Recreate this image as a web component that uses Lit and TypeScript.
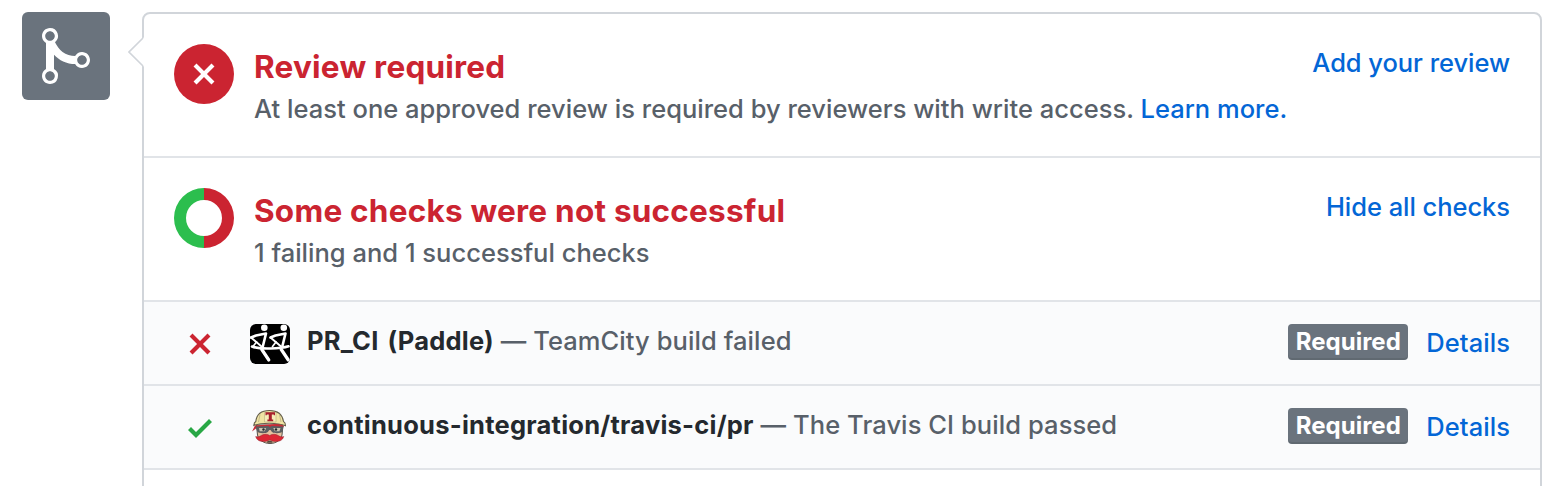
import { LitElement, html, css, svg } from "lit";
import { customElement, property } from "lit/decorators.js";

const X_PATH = "M7.48 8l3.75 3.75-1.48 1.48L6 9.48l-3.75 3.75-1.48-1.48L4.52 8 .77 4.25l1.48-1.48L6 6.52l3.75-3.75 1.48 1.48L7.48 8z";
const CHECK_PATH = "M12 5l-8 8-4-4 1.5-1.5L4 10l6.5-6.5L12 5z";
const MERGE_PATH =
  "M10 7c-.73 0-1.38.41-1.73 1.02V8C7.22 7.98 6 7.64 5.14 6.98c-.75-.58-1.5-1.61-1.89-2.44A1.993 1.993 0 0 0 2 .99C.89.99 0 1.89 0 3a2 2 0 0 0 1 1.72v6.56c-.59.35-1 .99-1 1.72 0 1.11.89 2 2 2a1.993 1.993 0 0 0 1-3.72V7.67c.67.7 1.44 1.27 2.3 1.69.86.42 2.03.63 2.97.64v-.02c.36.61 1 1.02 1.73 1.02 1.11 0 2-.89 2-2 0-1.11-.89-2-2-2zm-6.8 6c0 .66-.55 1.2-1.2 1.2-.65 0-1.2-.55-1.2-1.2 0-.65.55-1.2 1.2-1.2.65 0 1.2.55 1.2 1.2zM2 4.2C1.34 4.2.8 3.65.8 3c0-.65.55-1.2 1.2-1.2.65 0 1.2.55 1.2 1.2 0 .65-.55 1.2-1.2 1.2zm8 6c-.66 0-1.2-.55-1.2-1.2 0-.65.55-1.2 1.2-1.2.65 0 1.2.55 1.2 1.2 0 .65-.55 1.2-1.2 1.2z";

const icon = (path: string, w = 24, h = 32) => html`
  <svg width=${w} height=${h} viewBox="0 0 12 16" fill="currentColor" aria-hidden="true"><path fill-rule="evenodd" d=${path}></path></svg>`;

const rower = (dx: number) => svg`
  <g transform="translate(${dx} 0)" fill="none" stroke="#fff" stroke-linecap="round" stroke-linejoin="round">
    <circle cx="14.300" cy="3.800" r="3.300" fill="#fff" stroke="none"></circle>
    <path d="M1 13.500 6 11.500 16 9.500 12.800 22.500" stroke-width="2.600"></path>
    <path d="M1 13.500 11.500 22.500" stroke-width="1.900"></path>
    <path d="M6.500 18 3 22.500" stroke-width="1.700"></path>
    <path d="M11.800 25.500 18.800 36" stroke-width="3.200"></path>
  </g>`;

const paddleAvatar = html`
  <svg width="40" height="40" viewBox="0 0 40 40" aria-hidden="true">
    <rect width="40" height="40" fill="#000"></rect>
    ${rower(0)}${rower(19.5)}
    <path d="M2 22.500Q7 24.800 20 24.500T38.500 22.300" fill="none" stroke="#fff" stroke-width="2.600" stroke-linecap="round"></path>
  </svg>`;

const travisAvatar = html`
  <svg width="40" height="40" viewBox="0 0 40 40" aria-hidden="true">
    <path d="M6.500 17h26.500l-1 10c-1 5-6 8.500-12 8.500S8.500 32 7.500 27z" fill="#e5c3a0" stroke="#54504a" stroke-width="1"></path>
    <path d="M5 17.500 32 15.500l2 3.500-28 1.500-4 3z" fill="#c92b36"></path>
    <path d="M3.800 17.500C4 15 4.800 14 5.800 13.500 6.500 7 11 2.500 19.500 2.500S32.500 7 33.500 13.500c1.500.7 2 2 2 4.200C27 14.500 12 14.500 3.800 17.500z" fill="#f0e4a3" stroke="#655f4b" stroke-width="1.100"></path>
    <path d="M10 6.500 8.500 14M29.500 6.500 31 14" stroke="#c5bb8c" fill="none"></path>
    <path d="M14.500 4.500h11.500v9.500H14.500z" fill="#f6edb8" stroke="#b9ae7d" stroke-width=".6"></path>
    <path d="M15.500 4.300h9.500v3h-1.200V6.500h-2v5h1.400v1.800h-5.800v-1.800h1.400v-5h-2v.8h-1.300z" fill="#a8202c"></path>
    <path d="M5.500 18.500 18.500 18l1.500 1.200 1.500-1.200 12 .5-1 5c-1 2-8.500 2.300-10.500.5L20.500 22h-1.200l-1.500 2c-2 1.800-9.500 1.500-10.500-.5z" fill="#5c5e60"></path>
    <path d="M9 20h7.200l-1.500 3.200H9.700zM23.300 20h7.200l-1 3.200h-4.700z" fill="#ccc5b2"></path>
    <circle cx="13.500" cy="21.500" r="1.200" fill="#24282c"></circle><circle cx="26" cy="21.500" r="1.200" fill="#24282c"></circle>
    <path d="M19.700 27.500c3-2 7-1.200 9 .3 1.700 1.200 3.300 1.300 5 .7-1 4-4.500 5-8 5-2.500 0-4.500-.6-6-1.800-1.500 1.200-3.500 1.800-6 1.800-3.500 0-7-1-8-5 1.700.6 3.300.5 5-.7 2-1.500 6-2.300 9-.3z" fill="#dc2735" stroke="#8e2830" stroke-width=".5"></path>
    <path d="M17 33.600l2.700-1 2.800 1v1.200H17z" fill="#59483c"></path>
  </svg>`;

@customElement("check-row")
class CheckRow extends LitElement {
  @property() state = "failure";
  @property() name = "";
  @property() description = "";

  static styles = css`
    :host { display: flex; align-items: flex-start; box-sizing: border-box; height: 84px; padding: 0 30px 0 44px; border-bottom: 2px solid #e1e4e8; background: #fafbfc; color: #586069; font-size: 25.5px; line-height: 40px; white-space: nowrap; }
    svg { display: block; }
    .status { flex: none; width: 62px; padding-top: 26px; color: #cb2431; }
    .success { color: #28a745; }
    .avatar { flex: none; width: 40px; height: 40px; margin: 22px 17px 0 0; border-radius: 6px; overflow: hidden; }
    .text { flex: 1; padding-top: 19px; }
    .name { color: #24292e; font-weight: 650; letter-spacing: 0.24px; word-spacing: 2.5px; }
    .desc { letter-spacing: 0.08px; font-weight: 450; }
    .badge { flex: none; box-sizing: border-box; width: 120px; height: 36px; margin: 22px 18px 0 0; border-radius: 4px; background: #6a737d; box-shadow: inset 0 -2px 0 rgba(27, 31, 35, 0.12); color: #fff; font-size: 24px; font-weight: 700; line-height: 35px; text-align: center; }
    .details { padding-top: 21px; color: #0366d6; font-weight: 450; letter-spacing: 0.06px; text-decoration: none; }
  `;

  render() {
    const ok = this.state === "success";
    return html`
      <div class="status ${ok ? "success" : ""}">${icon(ok ? CHECK_PATH : X_PATH)}</div>
      <div class="avatar">${ok ? travisAvatar : paddleAvatar}</div>
      <div class="text"><span class="name">${this.name}</span> <span class="desc">— ${this.description}</span></div>
      <span class="badge">Required</span>
      <a class="details">Details</a>`;
  }
}

@customElement("app-root")
class AppRoot extends LitElement {
  static styles = css`
    :host { display: flex; align-items: flex-start; gap: 32px; box-sizing: border-box; height: 486px; padding: 12px 18px 0 22px; overflow: hidden; background: #fff; color: #586069; font-family: Inter, "Liberation Sans", sans-serif; font-size: 25.5px; font-weight: 450; }
    svg { display: block; }
    .merge { flex: none; display: grid; place-items: center; width: 88px; height: 88px; border-radius: 6px; background: #6a737d; color: #fff; }
    .card { position: relative; flex: 1; box-sizing: border-box; height: 500px; border: 2px solid #d1d5da; border-radius: 8px; }
    .caret { position: absolute; left: -16px; top: 22px; }
    .section { display: flex; align-items: flex-start; box-sizing: border-box; height: 144px; padding: 30px 30px 0; border-bottom: 2px solid #e1e4e8; white-space: nowrap; }
    .mark { flex: none; display: grid; place-items: center; width: 60px; height: 60px; margin-right: 20px; }
    .failed { border-radius: 50%; background: #cb2431; color: #fff; }
    .body { flex: 1; }
    .title { margin: 0; color: #cb2431; font-size: 31.5px; font-weight: 650; line-height: 46px; letter-spacing: 0.23px; }
    .sub { margin: 0; line-height: 38px; letter-spacing: 0.015px; }
    .link { color: #0366d6; text-decoration: none; }
    .action { line-height: 38px; letter-spacing: -0.05px; }
  `;

  render() {
    return html`
      <div class="merge">${icon(MERGE_PATH, 48, 64)}</div>
      <div class="card">
        <svg class="caret" width="17" height="32" viewBox="0 0 17 32">
          <path d="M17 1 15 2 1 16l14 14 2 1z" fill="#fff"></path>
          <path d="M15 2 1 16l14 14" fill="none" stroke="#d1d5da" stroke-width="1.6"></path>
        </svg>
        <div class="section">
          <div class="mark failed">${icon(X_PATH)}</div>
          <div class="body">
            <h4 class="title">Review required</h4>
            <p class="sub">At least one approved review is required by reviewers with write access. <a class="link">Learn more.</a></p>
          </div>
          <a class="link action">Add your review</a>
        </div>
        <div class="section">
          <div class="mark">
            <svg width="60" height="60" viewBox="0 0 60 60">
              <path d="M30 0a30 30 0 0 0 0 60V48a18 18 0 0 1 0-36z" fill="#2cbe4e"></path>
              <path d="M30 0a30 30 0 0 1 0 60V48a18 18 0 0 0 0-36z" fill="#cb2431"></path>
            </svg>
          </div>
          <div class="body">
            <h4 class="title">Some checks were not successful</h4>
            <p class="sub">1 failing and 1 successful checks</p>
          </div>
          <a class="link action">Hide all checks</a>
        </div>
        <check-row state="failure" name="PR_CI (Paddle)" description="TeamCity build failed"></check-row>
        <check-row state="success" name="continuous-integration/travis-ci/pr" description="The Travis CI build passed"></check-row>
      </div>`;
  }
}
